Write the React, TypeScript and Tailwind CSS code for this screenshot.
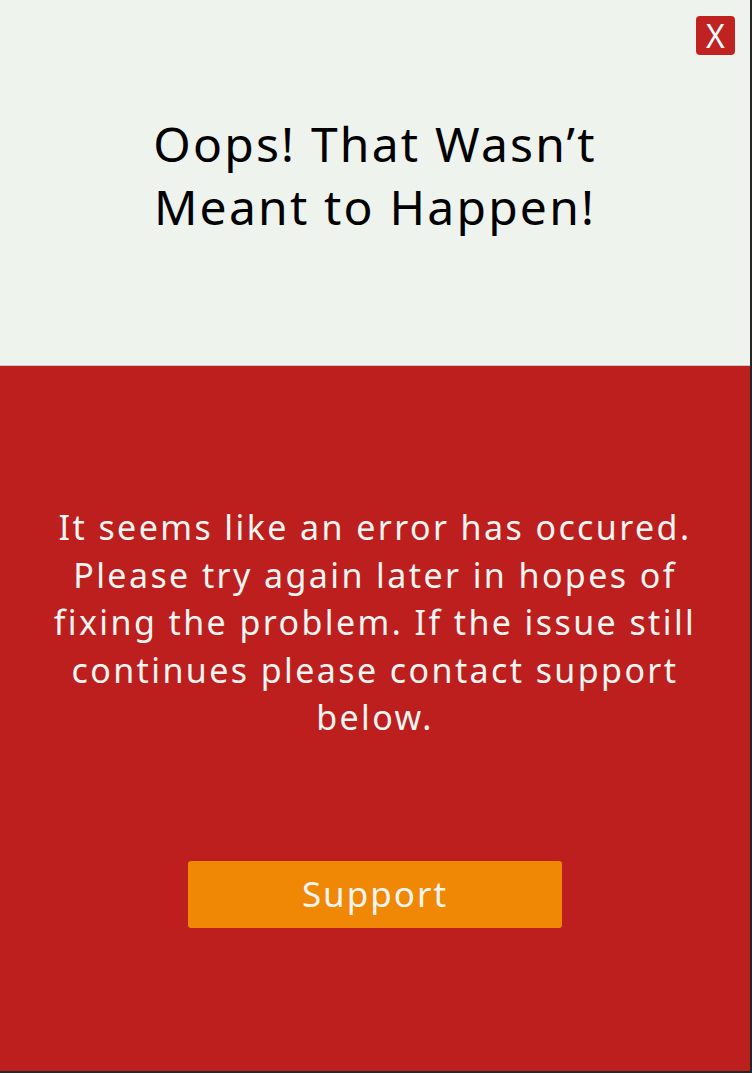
export default function App() {
    return (
        <div
            className="flex h-[1073px] w-[752px] flex-col border-r-2 border-b-2 border-[#262626] bg-[#eef3ee]"
            style={{ fontFamily: '"Noto Sans", "Open Sans", sans-serif' }}
        >
            {/* top: heading + close */}
            <section className="relative flex h-[366px] shrink-0 justify-center border-b border-[#c9c9c9]">
                <button
                    type="button"
                    aria-label="Close"
                    className="absolute top-[16px] right-[15px] flex h-[39px] w-[39px] items-center justify-center rounded-[4px] bg-[#c02222] text-[32px] leading-none text-white"
                >
                    X
                </button>
                <h1 className="mt-[112px] text-center text-[48px] leading-[63px] font-normal tracking-[2.2px] text-black">
                    Oops! That Wasn’t
                    <br />
                    Meant to Happen!
                </h1>
            </section>

            {/* bottom: message + support */}
            <section className="flex flex-1 flex-col items-center bg-[#bd1f1f]">
                <p className="mt-[138px] text-center text-[34px] leading-[47.5px] tracking-[2.4px] text-[#f1f5f1]">
                    It seems like an error has occured.
                    <br />
                    Please try again later in hopes of
                    <br />
                    fixing the problem. If the issue still
                    <br />
                    continues please contact support
                    <br />
                    below.
                </p>
                <button
                    type="button"
                    className="mt-[119px] h-[67px] w-[374px] rounded-[3px] bg-[#f08806] text-[35px] tracking-[2px] text-[#f1f5f1]"
                >
                    Support
                </button>
            </section>
        </div>
    );
}
